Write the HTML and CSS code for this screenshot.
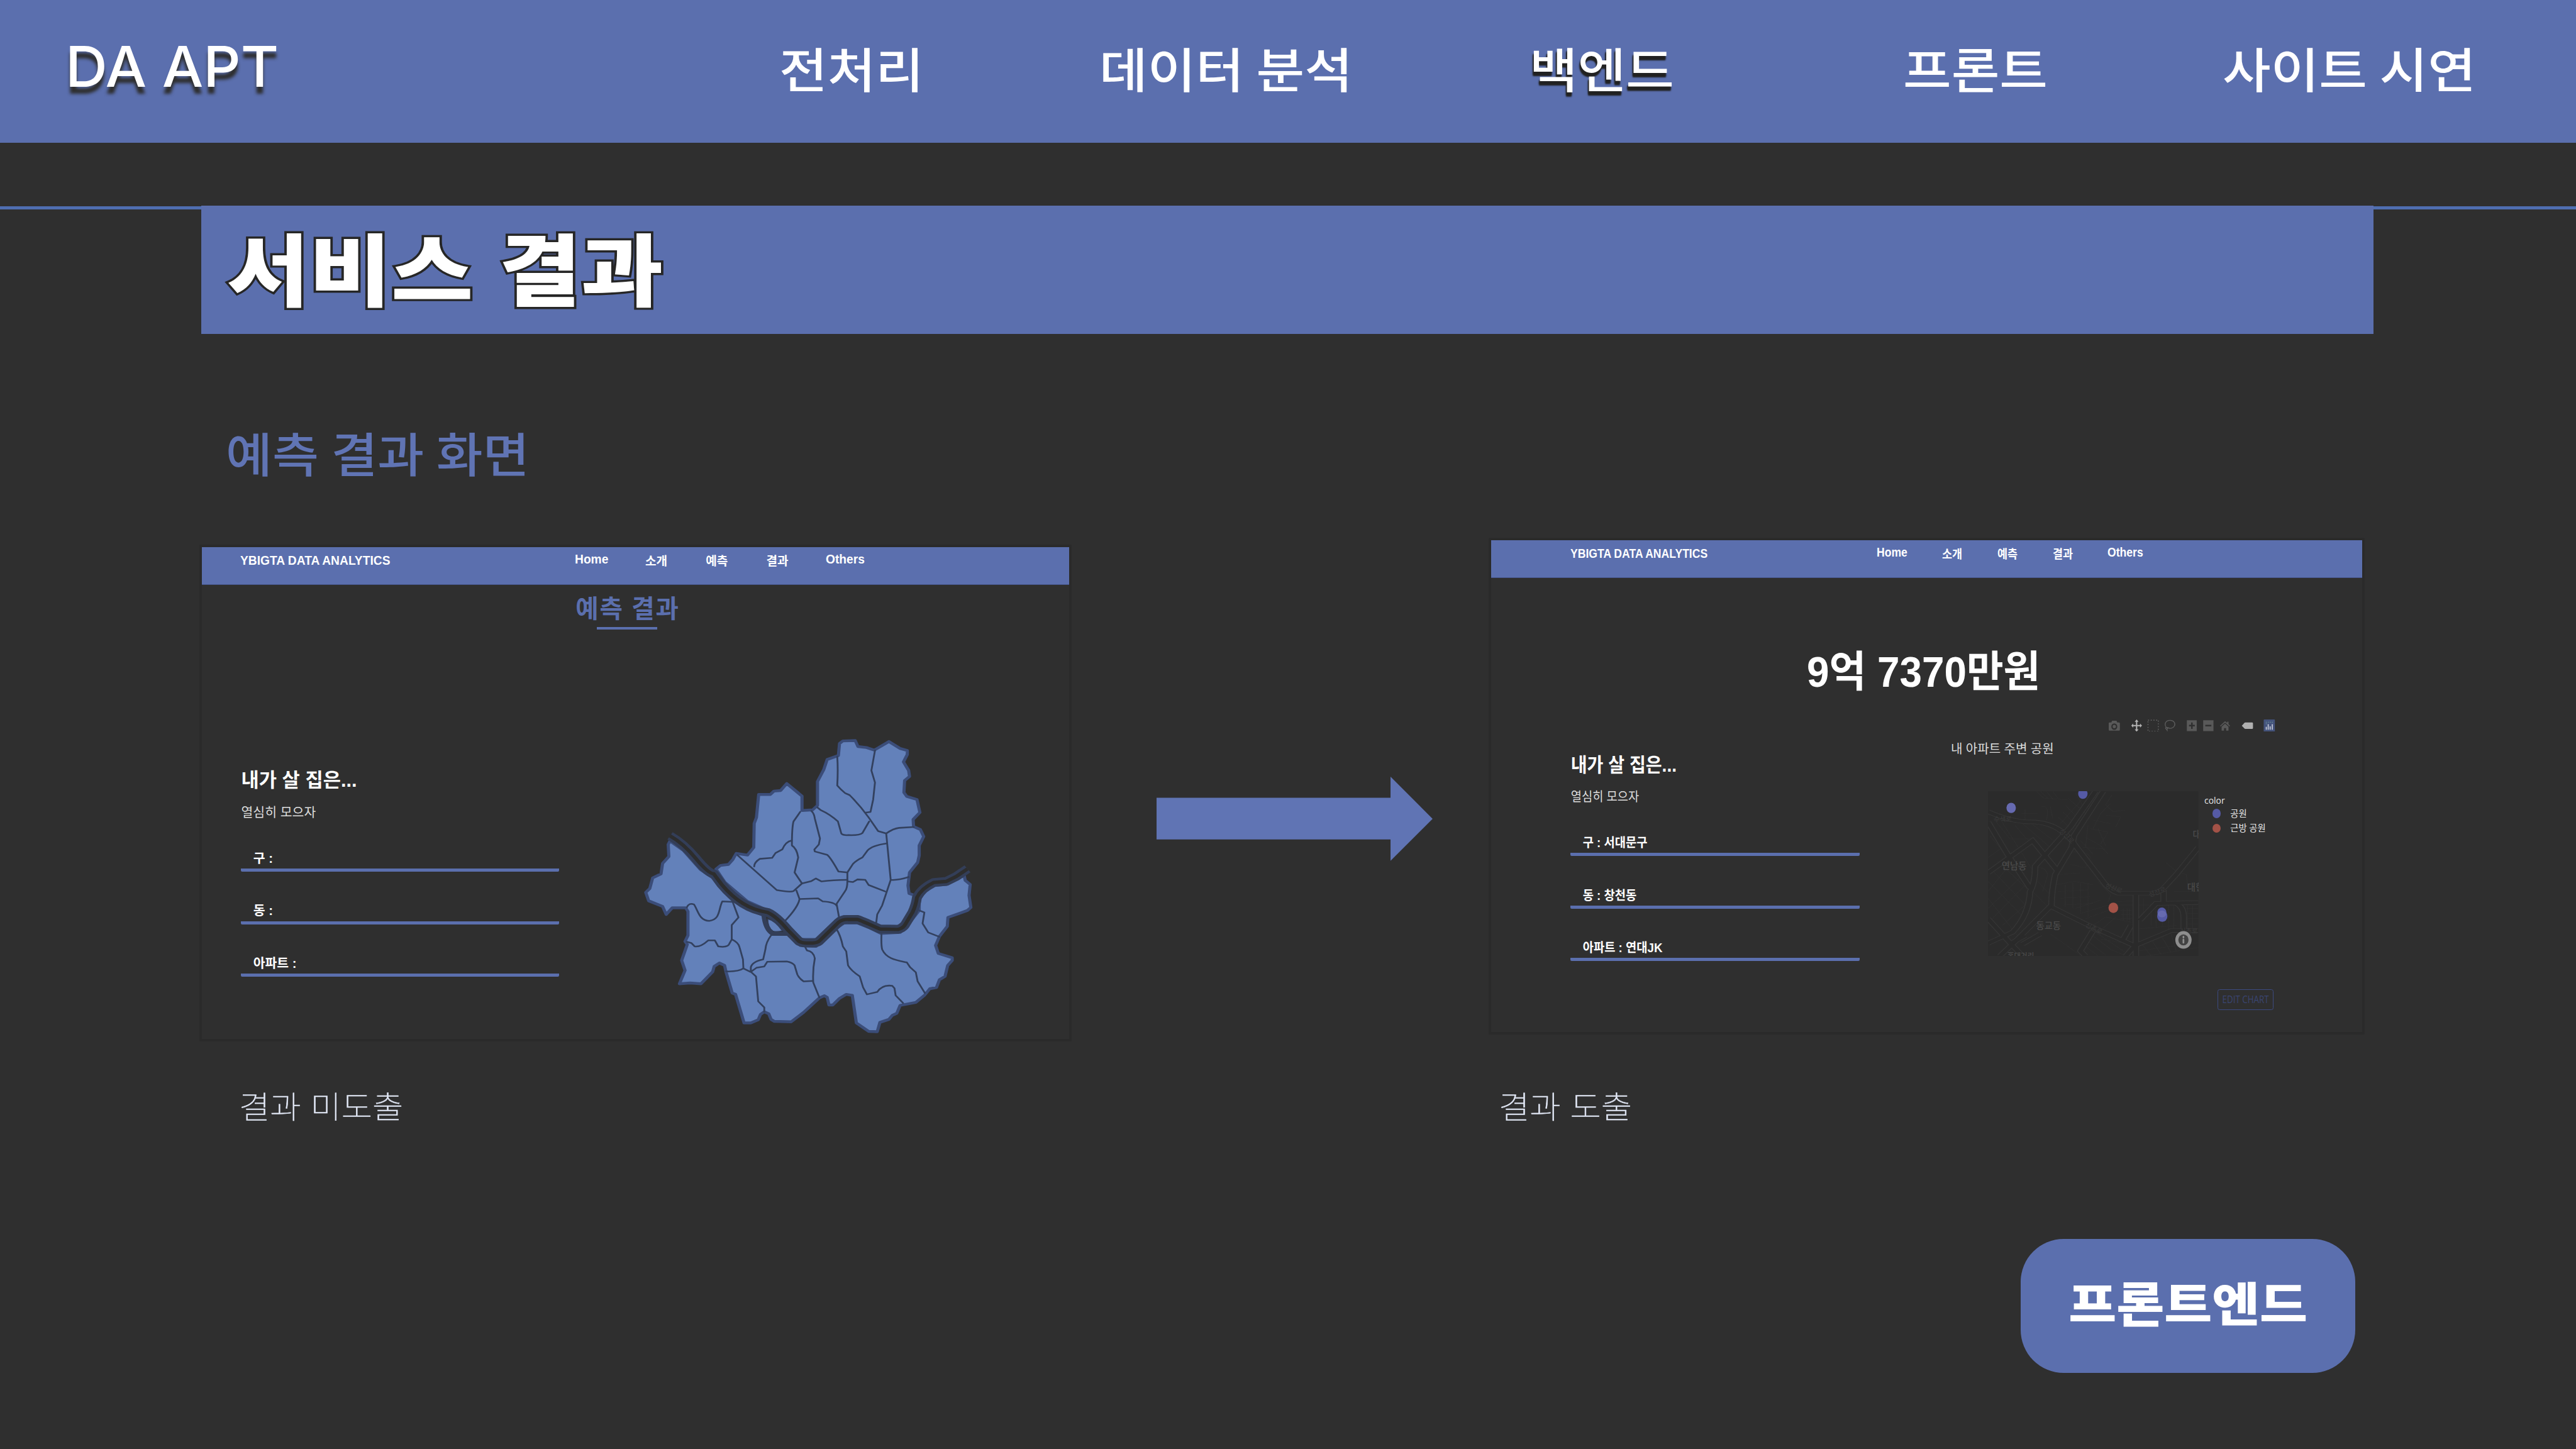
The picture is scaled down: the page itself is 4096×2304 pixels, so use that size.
FILE: index.html
```html
<!DOCTYPE html>
<html lang="ko">
<head>
<meta charset="utf-8">
<title>DA APT - 서비스 결과</title>
<link rel="stylesheet" href="styles.css">
</head>
<body>
<div class="slide">
  <header class="topbar">
    <div class="logo">DA APT</div>
    <a class="nav-item">전처리</a>
    <a class="nav-item">데이터 분석</a>
    <a class="nav-item active">백엔드</a>
    <a class="nav-item">프론트</a>
    <a class="nav-item">사이트 시연</a>
  </header>

  <div class="title-band"><div class="title-box"><h1>서비스 결과</h1></div></div>
  <h2>예측 결과 화면</h2>

  <main class="stage">
    <section class="panel before">
      <div class="site-bar">
        <span class="brand">YBIGTA DATA ANALYTICS</span>
        <span class="en">Home</span><span>소개</span><span>예측</span><span>결과</span><span class="en">Others</span>
      </div>
      <h3>예측 결과</h3>
      <div class="rule"></div>
      <div class="panel-body">
        <div class="form">
          <p class="lead">내가 살 집은...</p>
          <p class="sub">열심히 모으자</p>
          <div class="field"><span>구 :</span></div>
          <div class="field"><span>동 :</span></div>
          <div class="field"><span>아파트 :</span></div>
        </div>
        <svg class="seoul" viewBox="0 0 1568 1540" preserveAspectRatio="none">
          <g class="land">
            <path d="M360 698L380 680L415 675L435 650L450 620L500 628L528 590L530 470L540 440L550 325L602 325L618 308L648 305L675 270L743 333L743 405L790 402L812 380L812 260L840 200L855 150L905 130L910 70L925 57L980 55L992 85L1030 90L1065 103L1130 60L1180 95L1212 105L1212 125L1195 162L1218 205L1222 235L1200 255L1197 315L1210 335L1255 350L1268 415L1238 450L1240 485L1270 500L1285 535L1265 580L1265 630L1258 665L1222 715L1215 780L1220 820L1245 830L1235 895L1195 965L1170 985L1090 983L1030 955L990 935L930 935L905 945L805 1050L740 1050L665 960L610 915L500 860L400 765Z"/>
            <path d="M155 558L215 605L290 700L350 745L385 795L430 850L500 895L570 930L585 985L610 1025L690 1025L735 1080L805 1085L895 995L930 968L990 968L1040 990L1095 1020L1180 1015L1205 990L1265 905L1265 850L1290 810L1335 780L1385 775L1465 730L1470 755L1492 775L1487 830L1495 890L1480 905L1393 940L1390 985L1355 1035L1338 1080L1350 1120L1412 1142L1412 1155L1392 1180L1380 1235L1355 1252L1342 1290L1312 1297L1288 1330L1250 1365L1180 1380L1165 1420L1145 1430L1130 1450L1090 1465L1078 1512L1040 1510L985 1468L967 1330L940 1325L910 1345L880 1378L863 1378L855 1340L843 1332L820 1343L750 1415L695 1462L620 1460L605 1450L595 1422L575 1412L558 1425L548 1452L515 1468L485 1468L447 1325L432 1318L405 1215L398 1180L375 1168L352 1185L345 1212L293 1272L245 1268L197 1272L222 1205L207 1155L232 1075L222 1060L235 1030L235 910L225 892L165 892L138 925L122 885L60 857L47 815L65 795L78 742L115 722L122 670L150 635L147 575Z"/>
          </g>
          <g class="borders">
            <path d="M900 135Q904 200 900 280Q915 300 935 318L955 328Q1000 378 1040 440L1082 508L1118 520Q1150 495 1175 492L1240 488"/>
            <path d="M1068 105L1052 205L1068 265L1060 350L1048 412L1028 415"/>
            <path d="M1118 520L1138 752Q1170 755 1218 738M1118 570Q1055 580 1035 605L1012 640Q985 655 970 672L945 715"/>
            <path d="M812 390L825 402Q870 425 903 460L918 520Q925 530 950 528Q1000 530 1012 518L1042 460"/>
            <path d="M785 408Q797 420 800 445L823 545L818 575L798 600L800 610L855 627Q870 640 905 710L945 715L945 760"/>
            <path d="M735 412L705 460Q698 490 698 580Q720 595 726 640L710 715L743 770"/>
            <path d="M697 555Q670 560 655 600L625 618L610 642L555 647Q530 665 530 685"/>
            <path d="M455 628L630 803Q690 815 705 808L743 770L785 758L805 745L830 760Q880 752 945 752"/>
            <path d="M945 760L970 763L990 750L1025 752L1040 778L1113 810M1138 752L1100 880L1078 925L1072 980"/>
            <path d="M945 760Q945 795 935 808L897 872L908 940M718 805L732 848Q725 890 665 960M732 848L815 845L835 860Q890 864 897 882"/>
            <path d="M230 890Q240 865 262 875C280 905 285 957 330 957C380 950 370 900 388 860L430 862"/>
            <path d="M430 850L460 940L430 978L430 1050M405 1210Q460 1212 482 1195"/>
            <path d="M230 1062L250 1068L265 1085Q290 1090 325 1055L355 1055L370 1085Q415 1092 420 1070L430 1050Q460 1065 465 1090L480 1150L482 1195L512 1212"/>
            <path d="M605 1030Q582 1065 580 1100L570 1150Q520 1162 515 1190L515 1212L538 1235L548 1360L575 1390L575 1412"/>
            <path d="M518 1210L540 1192L575 1185L588 1162L675 1160Q700 1165 710 1180L722 1225Q730 1245 750 1260L790 1258"/>
            <path d="M758 1090L765 1105Q795 1110 800 1145Q790 1200 793 1265L820 1340"/>
            <path d="M895 995Q915 1030 925 1085L940 1110L948 1180Q960 1205 1000 1235L1015 1290L1032 1325L1078 1313Q1100 1275 1145 1282L1155 1295L1160 1330L1193 1368"/>
            <path d="M1097 1020Q1095 1080 1100 1100C1120 1150 1170 1155 1210 1165L1225 1190L1250 1215L1258 1260L1290 1318"/>
            <path d="M1265 905L1288 915L1280 970L1305 1015L1355 1037"/>
          </g>
          <path class="channel" d="M572 925Q578 1000 612 1022L690 1022"/>
          <path class="river-bank" d="M155 532Q215 570 270 645T350 722L385 775Q430 835 480 870T590 915Q630 935 680 1003L730 1060Q745 1068 760 1068L790 1068Q808 1068 820 1058L905 965Q925 948 950 950L990 950Q1020 962 1090 998L1170 1000Q1190 995 1200 980L1235 915Q1250 880 1255 840Q1275 795 1330 765L1385 760L1430 735L1480 697"/>
          <path class="river" d="M155 532Q215 570 270 645T350 722L385 775Q430 835 480 870T590 915Q630 935 680 1003L730 1060Q745 1068 760 1068L790 1068Q808 1068 820 1058L905 965Q925 948 950 950L990 950Q1020 962 1090 998L1170 1000Q1190 995 1200 980L1235 915Q1250 880 1255 840Q1275 795 1330 765L1385 760L1430 735L1480 697"/>
          <path class="island" d="M590 947Q622 955 656 1007Q630 1014 613 1008Q590 990 590 947Z"/>
        </svg>
      </div>
    </section>

    <svg class="arrow" viewBox="0 0 643 196"><path d="M0 49H545V0L643 98L545 196V146H0Z"/></svg>

    <section class="panel after">
      <div class="site-bar">
        <span class="brand">YBIGTA DATA ANALYTICS</span>
        <span class="en">Home</span><span>소개</span><span>예측</span><span>결과</span><span class="en">Others</span>
      </div>
      <p class="price">9억 7370만원</p>
      <div class="panel-body">
        <div class="form">
          <p class="lead">내가 살 집은...</p>
          <p class="sub">열심히 모으자</p>
          <div class="field"><span>구 : 서대문구</span></div>
          <div class="field"><span>동 : 창천동</span></div>
          <div class="field"><span>아파트 : 연대JK</span></div>
        </div>
        <div class="chart">
          <svg class="tools" viewBox="0 0 388 29">
            <g fill="#595959">
              <path fill-rule="evenodd" d="M2 7H6L8 3H18L20 7H23Q26 7 26 9V24Q26 26 24 26H2Q0 26 0 24V9Q0 7 2 7ZM13 9A7 7.500 0 1 0 13 24A7 7.500 0 1 0 13 9ZM13 12.500A3.800 4 0 1 1 13 20.500A3.800 4 0 1 1 13 12.500Z"/>
              <path fill-rule="evenodd" d="M182 2H205V27H182ZM192 7V12.500H187V16H192V22H195.500V16H200.500V12.500H195.500V7ZM220 2H244V27H220ZM225 12.500V16H239V12.500Z"/>
              <path d="M259 15L271 4L276 8V5H279V11L283 15L281 16L271 7.500L261 16ZM263 17L271 10L279 17V26H273.500V20H268.500V26H263Z"/>
            </g>
            <path fill="#b4b4b4" d="M65 0L69.500 5.500H66.500V12.800H73V9.500L77.500 14.300L73 19V15.800H66.500V23H69.500L65 28.500L60.500 23H63.500V15.800H57V19L52.500 14.300L57 9.500V12.800H63.500V5.500H60.500Z"/>
            <rect x="91.500" y="1.500" width="24" height="26" fill="none" stroke="#5c5c5c" stroke-width="2.500" stroke-dasharray="2.500 3.800"/>
            <path fill="none" stroke="#5c5c5c" stroke-width="2" d="M135 19C128 12 132 2 143 2C152 2 156 9 153 15C150 21 143 22 137 19C132 16 131 22 135 23C138 22 138 20 135 19M135 23L137 27"/>
            <path fill="#b0b0b0" d="M310 14.500L316 8Q317 7 318 7H334Q336 7 336 9V20Q336 22 334 22H318Q317 22 316 21Z"/>
            <rect x="361" width="26" height="29" rx="1.500" fill="#44537c"/>
            <path stroke="#c9cddb" stroke-width="2.400" stroke-linecap="round" d="M367 18V23M371.500 12V23M376 17V23M381 12V23"/>
            <path stroke="#6f9c9c" stroke-width="2" stroke-dasharray="2 2.700" d="M366 6.500H383M366 10H370"/>
          </svg>
          <p class="chart-title">내 아파트 주변 공원</p>
          <div class="plot">
            <svg class="park-map" viewBox="4631 1843 490 384">
              <rect x="4631" y="1843" width="490" height="384" fill="#2b2b2b"/>
              <g transform="translate(4600 1800) scale(.5867 .3954)" fill="none">
                <g class="lanes">
                  <path d="M53 500L110 440M60 370L130 495M75 270L140 390L230 390M100 270L190 480L240 600M160 310L200 380L280 480M190 300L300 440M230 305L330 420M53 640L200 860M60 560L215 800M90 520L220 700M53 740L170 960M53 700L140 540M53 800L200 590M70 860L215 640M110 900L215 760M140 940L210 820"/>
                  <path d="M245 110L275 150L370 160M262 110L290 150M285 110L310 155M310 110L330 150M370 150L450 250M360 190L430 300M400 120L440 220M350 230L410 320M330 260L390 340M450 180L380 290M430 150L340 300M265 200Q300 190 285 280M300 200L310 270M185 240H250M200 215V275"/>
                  <path d="M545 130L520 190L550 230L600 220M540 180L500 240L470 330M520 250L580 260L560 320M470 280L540 300M460 330L530 350L500 420M440 380L500 430L530 480M420 400L470 480M430 440L520 450M450 310L440 440M380 470Q440 450 460 500L440 560L380 540M490 330L520 430"/>
                  <path d="M240 560Q280 550 290 600L270 700M250 640L300 720M230 700L290 790M320 660L400 640L470 660M330 700L450 690M340 740L460 730M350 780L470 770M360 660V790M390 650V800M420 650V830M450 650V850M330 600L420 590M490 640L540 720L530 760M400 800L500 750M420 830L530 780M440 860L530 810M470 900L520 850L620 880M500 930L560 850"/>
                  <path d="M560 760L630 755M560 780H630M580 810H625M580 835H625M580 860H625M590 800V870M605 800V870M615 800V870M650 740V1000M670 740V860M700 770V900M720 800V910M745 770V900M770 780V920M790 780V920M650 780L720 780M650 920L800 900M845 780V920M865 780V920M840 800H888M840 830H888M840 860H888M840 890H888"/>
                  <path d="M300 950L420 1075M460 950L540 1040L600 1080M480 940L600 1060M440 980L520 1075M430 1010L490 1080M500 980L580 1000M660 1000L700 1080M700 980L740 1070M740 960L780 1060M780 950L800 1050M650 1050L888 1000M680 1080L888 1030M760 530L800 580L840 600L850 700M790 700H888"/>
                </g>
                <g class="road-edge">
                  <path d="M53 230Q140 285 210 290Q290 285 345 345Q380 380 400 430L520 660Q545 700 570 710H700Q735 705 750 680L800 600L888 440"/>
                  <path d="M480 109L380 320L280 485L240 550Q240 650 220 700Q215 840 150 940L53 1005M510 109L395 370L385 440L320 600Q305 700 305 780L150 1010L100 1080M53 290L130 480L220 680M53 590L230 400L330 580M53 860L145 1010L190 1080"/>
                  <path d="M305 790L440 890L635 1020L780 930H888M640 720V1080M750 690V770M655 870L720 770L888 765M800 770Q830 790 830 850V930M470 930L420 1050L440 1080M150 1000L200 960M190 1010L260 950M590 980L620 900M635 1020L600 1080"/>
                </g>
                <g class="road">
                  <path d="M53 230Q140 285 210 290Q290 285 345 345Q380 380 400 430L520 660Q545 700 570 710H700Q735 705 750 680L800 600L888 440"/>
                  <path d="M480 109L380 320L280 485L240 550Q240 650 220 700Q215 840 150 940L53 1005M510 109L395 370L385 440L320 600Q305 700 305 780L150 1010L100 1080M53 290L130 480L220 680M53 590L230 400L330 580M53 860L145 1010L190 1080"/>
                  <path d="M305 790L440 890L635 1020L780 930H888M640 720V1080M750 690V770M655 870L720 770L888 765M800 770Q830 790 830 850V930M470 930L420 1050L440 1080M150 1000L200 960M190 1010L260 950M590 980L620 900M635 1020L600 1080"/>
                </g>
              </g>
              <g class="place">
                <text x="4663" y="2024">연남동</text>
                <text x="4743" y="2164">동교동</text>
                <text x="5095" y="2075">대현</text>
                <text x="5108" y="1952">대</text>
                <text x="4676" y="2232" font-size="17">홍대거리</text>
              </g>
              <g class="street">
                <text x="4645" y="1914">수색로</text>
                <text transform="translate(4796 1937) rotate(45)">성산로</text>
                <text transform="translate(4903 2066) rotate(22)">성산로</text>
                <text transform="translate(5008 2090) rotate(-20)">성산로</text>
                <text transform="translate(4857 2158) rotate(28)">신촌로</text>
                <text x="5078" y="2174">신촌로</text>
              </g>
              <ellipse cx="4685" cy="1882" rx="11" ry="12" fill="#666ab0"/>
              <ellipse cx="4852" cy="1849" rx="11" ry="12" fill="#555aa5"/>
              <ellipse cx="4923" cy="2114.700" rx="11.300" ry="12.200" fill="#a35247"/>
              <ellipse cx="5036" cy="2125.500" rx="10.500" ry="11.500" fill="#555aa5"/>
              <ellipse cx="5037" cy="2134" rx="12" ry="13.500" fill="#555aa5"/>
              <ellipse cx="5036.300" cy="2129" rx="10" ry="8" fill="#666ab0"/>
              <ellipse cx="5086.300" cy="2189.500" rx="19" ry="20.500" fill="#8e8e8e"/>
              <ellipse cx="5086.300" cy="2189.500" rx="11.800" ry="12.800" fill="#424242"/>
              <path d="M5086.300 2182V2184M5086.300 2189V2196" stroke="#8e8e8e" stroke-width="4" stroke-linecap="round"/>
            </svg>
            <div class="legend">
              <b>color</b>
              <div><i></i>공원</div>
              <div><i class="near"></i>근방 공원</div>
            </div>
          </div>
          <div class="edit"><span>EDIT CHART</span></div>
        </div>
      </div>
    </section>
  </main>

  <div class="captions"><p>결과 미도출</p><p>결과 도출</p></div>
  <div class="cta"><span>프론트엔드</span></div>
</div>
</body>
</html>
```
FILE: styles.css
```css
/* 1rem is one sixtieth of the slide's width */
html { font-size: calc(100vw / 60); }
* { box-sizing: border-box; }
body { margin: 0; background: #2f2f2f; }
h1, h2, h3, p { margin: 0; font-weight: inherit; }
svg { display: block; flex: none; }

.slide {
  width: 60rem; height: 33.75rem; overflow: hidden;
  display: flex; flex-direction: column;
  background: #2f2f2f; color: #fff; white-space: nowrap;
  font-family: "Noto Sans CJK KR", sans-serif;
}

.topbar {
  flex: none; height: 3.32rem; background: #5b6fae;
  display: grid; align-items: start;
  grid-template-columns: 16.62rem 7.45rem 10.02rem 8.71rem 7.44rem 1fr;
  padding-left: 1.53rem;
}
.logo {
  margin-top: .8rem; font: 540 1.31rem/1.5rem Inter, sans-serif;
  transform-origin: left; transform: scaleX(1.035);
  text-shadow: 0 .16rem .08rem #2e2e2e;
}
.nav-item {
  margin-top: .965rem; font-size: 1.12rem; line-height: 1.2rem; font-weight: 500;
  word-spacing: -.05rem; transform-origin: left; transform: scaleX(1.09);
}
.active { text-shadow: -.02rem .1rem .03rem #222, -.02rem .07rem .03rem #222; }

.title-band { flex: none; margin-top: 1.48rem; border-top: .08rem solid #4f6eb1; height: 2.98rem; }
.title-box { margin: -.08rem 4.71rem 0 4.69rem; height: 2.98rem; background: #5b6fae; }
.title-box h1 {
  padding: .4rem 0 0 .53rem; font-size: 1.83rem; line-height: 2rem; font-weight: 900;
  word-spacing: .02rem; transform-origin: left; transform: scaleX(1.135);
  -webkit-text-stroke: .1rem #262626; paint-order: stroke fill;
}
h2 {
  flex: none; margin: 2.15rem 0 0 5.26rem; color: #6074b4;
  font-size: 1.1rem; line-height: 1.2rem; font-weight: 500;
  word-spacing: -.04rem; transform-origin: left; transform: scaleX(1.07);
}

.stage { flex: none; margin-top: 1.39rem; height: 11.74rem; display: flex; align-items: flex-start; padding-left: 4.64rem; }
.panel {
  flex: none; height: 11.58rem; border: .06rem solid #2a2a2a; border-radius: .03rem;
  font-family: "Liberation Sans", "Noto Sans CJK KR", sans-serif; font-weight: 700;
}
.before { width: 20.32rem; margin-top: .16rem; --squeeze: 1; }
.after { width: 20.4rem; margin-left: 1.31rem; --squeeze: .915; }
.arrow { width: 6.43rem; height: 1.96rem; margin: 5.57rem 0 0 1.98rem; fill: #6074b4; }

.site-bar {
  height: .885rem; background: #5b6fae; border-bottom: .01rem solid #47588f;
  display: grid; align-items: start; font-size: .28rem; line-height: .4rem;
}
.site-bar span { margin-top: .135rem; transform-origin: left; transform: scaleX(var(--squeeze)); }
.site-bar .brand { margin-top: .125rem; font-size: .295rem; transform: scaleX(calc(var(--squeeze) * .955)); }
.site-bar .en { margin-top: .1rem; font-size: .295rem; transform: scaleX(calc(var(--squeeze) * .955)); }
.before .site-bar { padding-left: .9rem; grid-template-columns: 7.79rem 1.64rem 1.41rem 1.41rem 1.39rem 1fr; }
.after .site-bar { padding-left: 1.84rem; grid-template-columns: 7.14rem 1.51rem 1.29rem 1.3rem 1.27rem 1fr; }

.before h3 { margin: .27rem 0 0 8.71rem; font-size: .58rem; line-height: .6rem; letter-spacing: .025rem; color: #5b6fae; }
.rule { margin: .115rem 0 0 9.2rem; width: 1.41rem; height: .06rem; background: #5b6fae; }
.price { margin: 1.64rem 0 .04rem 7.35rem; font-size: 1rem; line-height: 1.1rem; transform-origin: left; transform: scaleX(.935); }

.panel-body { display: flex; align-items: flex-start; }
.form { flex: none; }
.before .form { margin: 3.2rem 0 0 .91rem; width: 7.41rem; }
.after .form { margin: 1.26rem 0 0 1.84rem; width: 6.74rem; }
.lead, .sub, .field span { transform-origin: left; transform: translate(.01rem, .015rem) scaleX(var(--squeeze)); }
.after .lead { transform: translate(.01rem, .03rem) scaleX(var(--squeeze)); }
.lead { font-size: .45rem; line-height: .6rem; }
.sub { margin: .24rem 0 .67rem; font-size: .3rem; line-height: .4rem; font-weight: 400; color: #ddd; }
.field { height: .53rem; border-bottom: .075rem solid #5b6fae; border-radius: .03rem; padding-left: .28rem; margin-bottom: .69rem; }
.field span { display: block; font-size: .3rem; line-height: .4rem; }

.seoul { width: 8.2rem; height: 7.17rem; margin: 2.325rem 0 0 1.78rem; }
.seoul path { stroke-linejoin: round; }
.land { fill: #6381ba; stroke: #3b4d79; stroke-width: 14; }
.borders { fill: none; stroke: #33415f; stroke-width: 8; stroke-linecap: round; }
.channel { fill: none; stroke: #333e58; stroke-width: 20; }
.river-bank { fill: none; stroke: #333e58; stroke-width: 44; }
.river { fill: none; stroke: #2d2d2d; stroke-width: 17; }
.island { fill: #6381ba; stroke: #333e58; stroke-width: 5; }

.chart { font-weight: 400; }
.tools { width: 3.88rem; height: .29rem; margin: .51rem 0 0 5.8rem; }
.chart-title { margin: .2rem 0 0 2.12rem; font: .295rem/.4rem "Open Sans", "Noto Sans CJK KR", sans-serif; color: #dcdcdc; }
.plot { display: flex; margin: .78rem 0 0 2.99rem; }
.park-map { width: 4.9rem; height: 3.84rem; }
.lanes { stroke: #303030; stroke-width: 3; }
.road-edge { stroke: #353535; stroke-width: 26; }
.road { stroke: #2a2a2a; stroke-width: 18; }
.place { fill: #4a4a4a; font: 500 21px "Noto Sans CJK KR", sans-serif; }
.street { fill: #3b3b3b; font: 400 15px "Noto Sans CJK KR", sans-serif; }
.legend { margin-left: .13rem; font: .21rem/.34rem "Open Sans", "Noto Sans CJK KR", sans-serif; color: #e6e6e6; }
.legend b { display: block; margin-top: .05rem; font-weight: 400; transform-origin: left; transform: scaleX(.97); }
.legend div { display: flex; align-items: center; height: .34rem; padding-left: .19rem; }
.legend b + div { margin-top: -.03rem; }
.legend i { width: .2rem; height: .215rem; border-radius: 50%; background: #555aa5; margin-right: .22rem; }
.legend .near { background: #a35247; }
.edit {
  margin: .78rem 0 0 8.33rem; width: 1.3rem; height: .48rem;
  border: .015rem solid #3c4a80; border-radius: .05rem;
  display: flex; align-items: center; justify-content: center;
  font: .225rem/.4rem "Open Sans", sans-serif; color: #3a4572;
}
.edit span { transform: scaleX(.87); }

.captions { flex: none; margin-top: 1.08rem; display: flex; padding-left: 5.56rem; font-size: .72rem; line-height: .8rem; font-weight: 100; color: #e2e8f6; -webkit-text-stroke: .008rem #e2e8f6; }
.captions p { flex: none; width: 29.35rem; transform-origin: left; transform: scaleX(1.09); }
.captions p:last-child { width: auto; }
.cta {
  flex: none; margin: 2.72rem 0 0 47.07rem; width: 7.79rem; height: 3.12rem; border-radius: 1rem;
  background: #5b6fae; display: flex; justify-content: center;
}
.cta span { margin-top: .845rem; font-size: 1.09rem; line-height: 1.2rem; font-weight: 900; transform: scaleX(1.11); }
```
